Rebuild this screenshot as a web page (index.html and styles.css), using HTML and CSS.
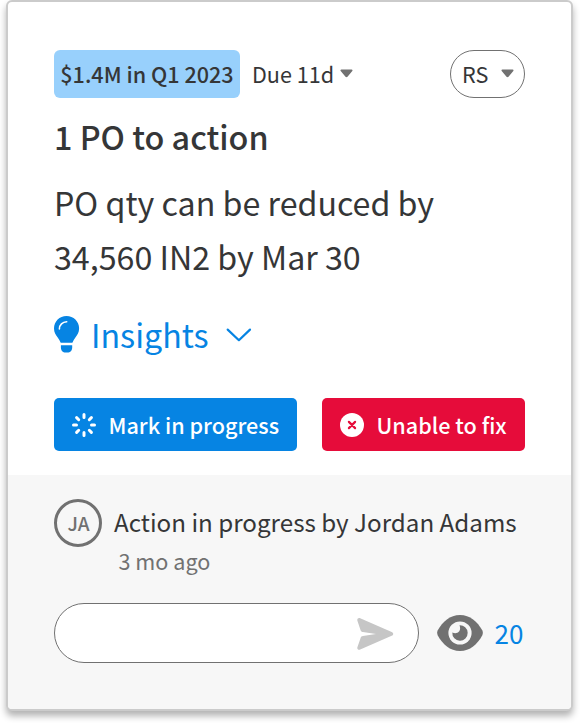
FILE: index.html
```html
<!DOCTYPE html>
<html lang="en">
<head>
  <meta charset="UTF-8">
  <meta name="viewport" content="width=device-width, initial-scale=1.0">
  <title>1 PO to action</title>
  <link rel="stylesheet" href="styles.css">
</head>
<body>
  <div class="card">
    <div class="card-main">
      <div class="card-header">
        <span class="value-tag">$1.4M in Q1 2023</span>
        <span class="due">Due 11d
          <svg class="caret" viewBox="0 0 13 9"><path d="M1.4.5h10.2c.9 0 1.2.8.7 1.4L7.5 7.7c-.6.6-1.4.6-2 0L.7 1.9C.2 1.3.5.5 1.4.5z"/></svg>
        </span>
        <button class="owner">RS
          <svg class="caret" viewBox="0 0 13 9"><path d="M1.4.5h10.2c.9 0 1.2.8.7 1.4L7.5 7.7c-.6.6-1.4.6-2 0L.7 1.9C.2 1.3.5.5 1.4.5z"/></svg>
        </button>
      </div>

      <h2 class="title">1 PO to action</h2>
      <p class="desc">PO qty can be reduced by<br>34,560 IN2 by Mar 30</p>

      <a class="insights">
        <svg class="bulb" viewBox="0 0 26 37">
          <path class="fill" d="M12.5 0C5.5 0 0 5.5 0 12.3c0 4.3 1.8 6.7 3.7 9.2 1.2 1.6 2.2 3.3 3 5.3h11.7c.8-2 1.8-3.7 3-5.3 1.9-2.5 3.7-4.9 3.7-9.2C25.1 5.5 19.5 0 12.5 0z"/>
          <path class="fill" d="M6.9 29.2h11.3v2.3c0 3-2 5-4.7 5h-1.9c-2.7 0-4.7-2-4.7-5z"/>
          <path class="shine" d="M5.4 12.9c0-4 3.1-7 7.3-7.2"/>
        </svg>
        <span>Insights</span>
        <svg class="chevron" viewBox="0 0 26 14"><path d="M1.7 1.6L12.9 12.2 24 1.6"/></svg>
      </a>

      <div class="actions">
        <button class="btn btn-progress">
          <svg class="btn-icon" viewBox="0 0 24 24"><path d="M12 1.5v3M12 19.5v3M1.5 12h3M19.5 12h3M4.6 4.6l2.1 2.1M17.3 17.3l2.1 2.1M4.6 19.4l2.1-2.1M17.3 6.7l2.1-2.1"/></svg>
          <span>Mark in progress</span>
        </button>
        <button class="btn btn-unable">
          <svg class="btn-icon" viewBox="0 0 24 24"><circle cx="12" cy="12" r="12"/><path d="M8.9 8.9l6.2 6.2M15.1 8.9l-6.2 6.2"/></svg>
          <span>Unable to fix</span>
        </button>
      </div>
    </div>

    <div class="card-footer">
      <div class="activity">
        <span class="avatar">JA</span>
        <div class="activity-body">
          <div class="activity-text">Action in progress by Jordan Adams</div>
          <div class="activity-time">3 mo ago</div>
        </div>
      </div>
      <div class="reply">
        <div class="reply-input">
          <svg class="send" viewBox="0 0 37 32"><path d="M3.2.3l31.5 13.8c2 .9 2 2.8 0 3.7L3.2 31.6C1.4 32.4-.2 31 .4 29.2l3.2-9.3c.4-1.1 1.2-1.6 2.3-1.8L19 16.1 5.9 14.1c-1.1-.2-1.9-.8-2.3-1.9L.4 2.7C-.2.9 1.4-.5 3.2.3z"/></svg>
        </div>
        <svg class="eye" viewBox="0 0 46 36">
          <path class="eye-body" d="M23 0c10 0 17.5 6.8 22.2 15.2.9 1.7.9 3.5 0 5.3C40.5 29.2 33 36 23 36S5.5 29.2.8 20.5c-.9-1.8-.9-3.6 0-5.3C5.5 6.8 13 0 23 0z"/>
          <circle class="eye-ring" cx="23" cy="18" r="11.6"/>
          <path class="eye-body" d="M22.5 10.3a7.7 7.7 0 1 1-7.2 7.2c1 .6 2 .8 3.1.8 2.6 0 4.7-2.1 4.7-4.7 0-1.2-.2-2.3-.6-3.3z"/>
        </svg>
        <span class="views">20</span>
      </div>
    </div>
  </div>
</body>
</html>
```

FILE: styles.css
```css
* { margin: 0; padding: 0; box-sizing: border-box; }
body {
  font-family: 'Noto Sans CJK SC', 'Open Sans', sans-serif;
  background: #fff;
  color: #353637;
  height: 723px;
  overflow: hidden;
}
svg { display: block; flex: none; }
button { font-family: inherit; color: inherit; border: none; background: none; }
.card {
  width: 567px;
  height: 711px;
  margin-left: 6px;
  border: 2px solid #cbcbcb;
  border-radius: 6px;
  overflow: hidden;
  background: #fff;
  box-shadow: 0 5px 7px rgba(0, 0, 0, 0.3);
}
.card-main {
  height: 473px;
  padding: 47.5px 46px 0;
}
.card-header {
  display: flex;
  align-items: center;
  height: 48px;
  font-size: 21.6px;
  line-height: 48px;
  white-space: nowrap;
}
.value-tag {
  width: 186px;
  background: #98d0fc;
  border-radius: 6px;
  text-align: center;
  font-weight: 500;
}
.due {
  display: flex;
  align-items: center;
  gap: 6px;
  margin-left: 12px;
}
.caret { width: 13px; height: 9px; fill: #717171; }
.owner {
  display: flex;
  align-items: center;
  justify-content: space-between;
  width: 75px;
  height: 48px;
  margin-left: auto;
  padding: 0 10px 0 11px;
  border: 1.5px solid #717171;
  border-radius: 24px;
  font-size: 21.6px;
}
.title {
  margin-top: 14px;
  font-size: 32.3px;
  font-weight: 500;
  line-height: 48px;
}
.desc {
  margin-top: 15px;
  font-size: 32.2px;
  line-height: 54px;
  white-space: nowrap;
}
.insights {
  display: flex;
  align-items: center;
  height: 48px;
  margin-top: 27px;
  color: #0684e3;
  font-size: 32.2px;
  line-height: 48px;
}
.bulb { width: 26px; height: 37px; margin: 2px 11px 0 0; }
.bulb .fill { fill: #0684e3; }
.bulb .shine { fill: none; stroke: #fff; stroke-width: 1.6; stroke-linecap: round; }
.chevron { width: 26px; height: 14px; margin: 2px 0 0 17px; }
.chevron path { fill: none; stroke: #0684e3; stroke-width: 2.2; stroke-linecap: round; stroke-linejoin: round; }
.actions {
  display: flex;
  justify-content: space-between;
  margin-top: 40.5px;
}
.btn {
  display: flex;
  align-items: center;
  gap: 12.5px;
  height: 53px;
  padding-left: 18px;
  border-radius: 5px;
  color: #fff;
  font-size: 21.6px;
  font-weight: 500;
  white-space: nowrap;
}
.btn-icon { width: 24px; height: 24px; }
.btn-progress { width: 243px; background: #0684e3; }
.btn-progress path { fill: none; stroke: #fff; stroke-width: 3; stroke-linecap: round; }
.btn-unable { width: 203px; background: #e60c3a; }
.btn-unable circle { fill: #fff; }
.btn-unable path { stroke: #e60c3a; stroke-width: 2.2; stroke-linecap: round; }
.card-footer {
  height: 234px;
  padding: 24px 46px 0;
  background: #f7f7f7;
}
.activity { display: flex; white-space: nowrap; }
.avatar {
  width: 48px;
  height: 48px;
  margin-right: 12px;
  padding-left: 1px;
  border: 3px solid #717171;
  border-radius: 50%;
  color: #717171;
  font-size: 19px;
  font-weight: 500;
  line-height: 42px;
  text-align: center;
}
.activity-text { font-size: 24.2px; line-height: 46px; }
.activity-time {
  padding-left: 4.5px;
  color: #717171;
  font-size: 21.6px;
  line-height: 31px;
}
.reply {
  display: flex;
  align-items: center;
  margin-top: 27px;
}
.reply-input {
  display: flex;
  align-items: center;
  justify-content: flex-end;
  width: 364.5px;
  height: 60px;
  padding-right: 24px;
  border: 1.5px solid #717171;
  border-radius: 30px;
  background: #fff;
}
.send { width: 37px; height: 32px; margin-top: 1px; fill: #c6c6c6; }
.eye { width: 46px; height: 36px; margin-left: 18px; }
.eye-body { fill: #717171; }
.eye-ring { fill: #f7f7f7; }
.views {
  margin-left: 12px;
  color: #0684e3;
  font-size: 26px;
  line-height: 48px;
}
```
